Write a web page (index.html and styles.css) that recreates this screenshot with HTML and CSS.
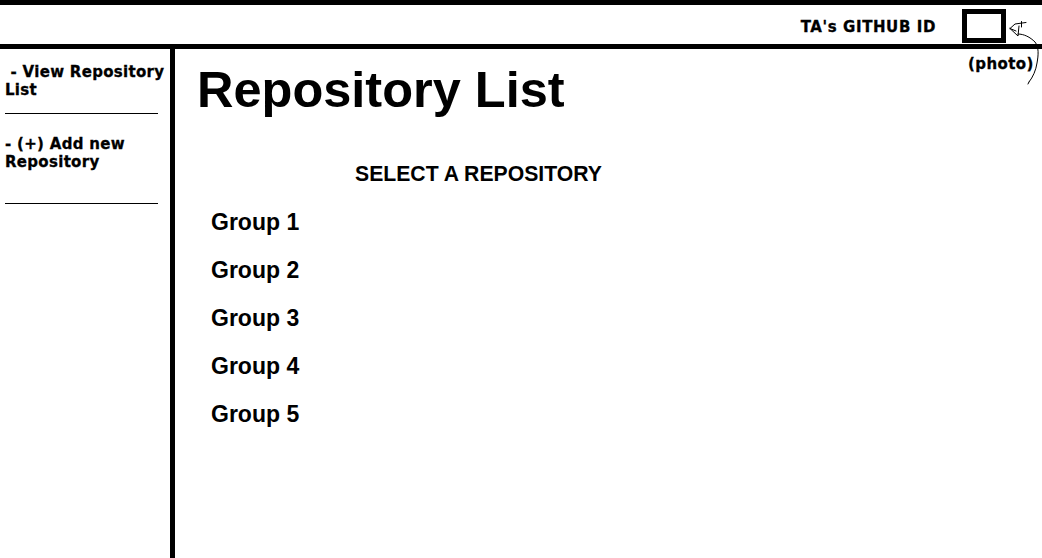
FILE: index.html
```html
<!DOCTYPE html>
<html lang="en">
<head>
<meta charset="utf-8">
<title>Repository List</title>
<link rel="stylesheet" href="styles.css">
</head>
<body>
<div class="page">
  <header class="topbar">
    <span class="ta-id">TA's GITHUB ID</span>
    <div class="photo-box"></div>
    <span class="photo-label">(photo)</span>
    <svg class="photo-arrow" width="42" height="75" viewBox="1000 15 42 75" aria-hidden="true">
      <g fill="none" stroke="#000" stroke-width="1" stroke-linecap="round" stroke-linejoin="round">
        <path d="M1010 28.5 L1015 24 L1026 22.5"/>
        <path d="M1021.5 21.5 L1021.5 27"/>
        <path d="M1010 28.5 L1018 36 L1019 26"/>
        <path d="M1010 28.5 L1016 31"/>
        <path d="M1018 34 C1024 34 1030 37 1035 42 C1039 47 1038.5 55 1037 63 C1036 70 1033 77 1029 82"/>
        <path d="M1029 82 L1028 84"/>
      </g>
    </svg>
  </header>
  <div class="body-row">
    <nav class="sidebar">
      <a class="nav-item nav-first">&nbsp;- View Repository List</a>
      <a class="nav-item nav-second">- (+) Add new Repository</a>
    </nav>
    <main class="content">
      <h1 class="title">Repository List</h1>
      <h2 class="subtitle">SELECT A REPOSITORY</h2>
      <ul class="groups">
        <li>Group 1</li>
        <li>Group 2</li>
        <li>Group 3</li>
        <li>Group 4</li>
        <li>Group 5</li>
      </ul>
    </main>
  </div>
</div>
</body>
</html>
```

FILE: styles.css
```css
html, body {
  margin: 0;
  padding: 0;
  background: #fff;
  color: #000;
}

.page {
  width: 1042px;
  height: 558px;
  display: flex;
  flex-direction: column;
  overflow: hidden;
}

.topbar {
  position: relative;
  height: 39px;
  border-top: 5px solid #000;
  border-bottom: 5px solid #000;
  display: flex;
  justify-content: flex-end;
  align-items: flex-start;
  padding-right: 36px;
  flex: none;
}

.ta-id {
  font-family: "DejaVu Sans", Verdana, sans-serif;
  font-weight: bold;
  font-size: 15px;
  line-height: 16px;
  letter-spacing: 0.6px;
  -webkit-text-stroke: 0.3px #000;
  margin-top: 14px;
  margin-right: 26px;
}

.photo-box {
  width: 34px;
  height: 24px;
  border: 5px solid #000;
  margin-top: 4px;
}

.photo-label {
  position: absolute;
  left: 968px;
  top: 50px;
  font-family: "DejaVu Sans", Verdana, sans-serif;
  font-weight: bold;
  font-size: 15px;
  line-height: 18px;
  letter-spacing: 0.4px;
  -webkit-text-stroke: 0.3px #000;
  white-space: nowrap;
}

.photo-arrow {
  position: absolute;
  left: 1000px;
  top: 10px;
  overflow: visible;
}

.body-row {
  flex: 1;
  display: flex;
  min-height: 0;
}

.sidebar {
  width: 165px;
  padding: 14px 0 0 5px;
  border-right: 5px solid #000;
  display: flex;
  flex-direction: column;
  flex: none;
}

.nav-item {
  position: relative;
  display: block;
  width: 165px;
  font-family: "DejaVu Sans", Verdana, sans-serif;
  font-weight: bold;
  font-size: 15px;
  line-height: 18px;
  letter-spacing: 0.3px;
  -webkit-text-stroke: 0.3px #000;
  color: #000;
}

.nav-item::after {
  content: "";
  position: absolute;
  left: 0;
  bottom: 0;
  width: 153px;
  height: 1px;
  background: #000;
}

.nav-first {
  padding-bottom: 15px;
}

.nav-second {
  margin-top: 21px;
  padding-bottom: 33px;
}

.content {
  flex: 1;
  padding: 16px 0 0 22px;
  font-family: "Liberation Sans", Arial, sans-serif;
}

.title {
  margin: 0;
  font-size: 50.5px;
  line-height: 50px;
  font-weight: bold;
}

.subtitle {
  margin: 47px 0 0 158px;
  font-size: 21.2px;
  line-height: 24px;
  font-weight: bold;
}

.groups {
  list-style: none;
  margin: 24px 0 0 14px;
  padding: 0;
  display: flex;
  flex-direction: column;
  gap: 24px;
}

.groups li {
  font-size: 23px;
  line-height: 24px;
  font-weight: bold;
}
```
